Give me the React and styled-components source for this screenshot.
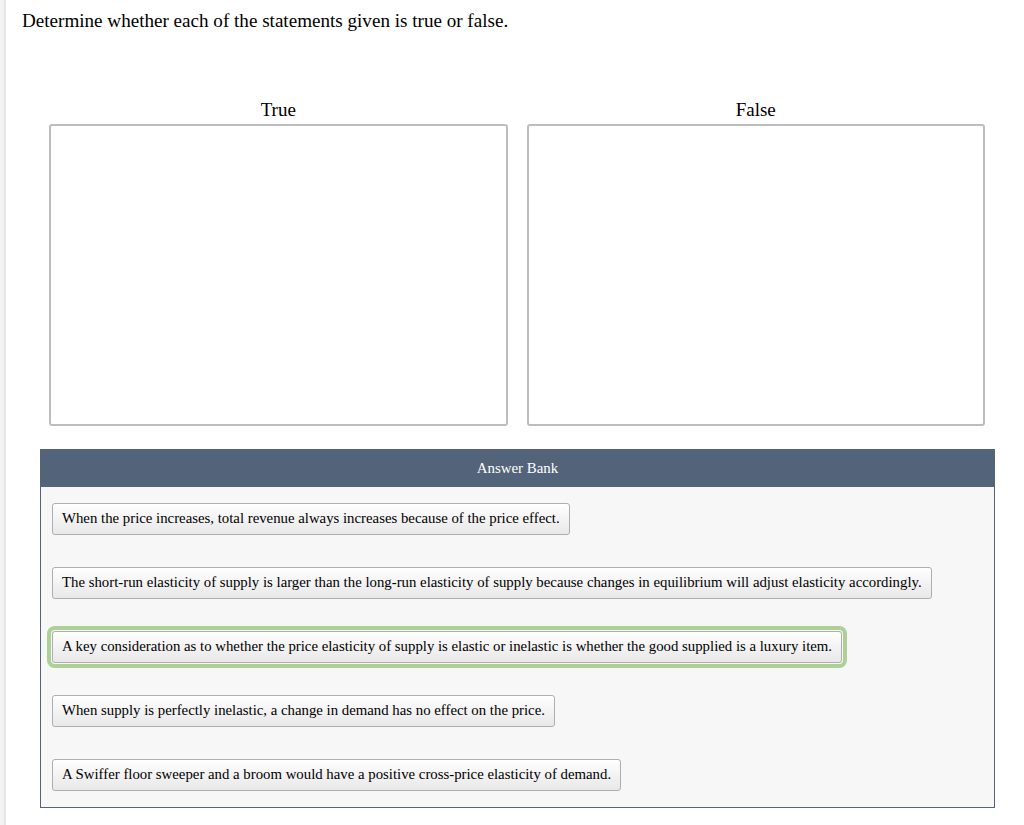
import * as React from 'react';
import styled, { createGlobalStyle } from 'styled-components';

const GlobalStyle = createGlobalStyle`
  html, body {
    margin: 0;
    padding: 0;
    background: #ffffff;
  }
  body {
    font-family: "Liberation Serif", "Times New Roman", serif;
    color: #000000;
  }
`;

const Page = styled.div`
  min-height: 825px;
  border-left: 4px solid #f2f2f2;
  box-sizing: border-box;
`;

const Content = styled.div`
  min-height: 825px;
  border-left: 2px solid #e6e6e6;
  padding: 10px 28px 18px 16px;
  box-sizing: border-box;
`;

const Prompt = styled.div`
  font-size: 19.1px;
  line-height: 22px;
`;

const Columns = styled.div`
  display: grid;
  grid-template-columns: 1fr 1fr;
  column-gap: 19px;
  width: 936px;
  margin: 67px 0 0 27px;
`;

const Column = styled.div`
  display: flex;
  flex-direction: column;
  gap: 3px;
`;

const ColumnLabel = styled.div`
  font-size: 19px;
  line-height: 22px;
  text-align: center;
`;

const DropZone = styled.div`
  height: 302px;
  border: 2px solid #bdbdbd;
  border-radius: 3px;
  background: #ffffff;
  box-sizing: border-box;
`;

const Bank = styled.section`
  width: 955px;
  margin: 23px 0 0 18px;
  border: 1px solid #536379;
  box-sizing: border-box;
`;

const BankHeader = styled.div`
  height: 37px;
  background: #536379;
  color: #ffffff;
  font-size: 14.9px;
  line-height: 37px;
  text-align: center;
`;

const BankBody = styled.div`
  display: flex;
  flex-direction: column;
  align-items: flex-start;
  gap: 32px;
  padding: 16px 11px 16px 11px;
  background: #f7f7f7;
`;

const Chip = styled.div`
  height: 32px;
  box-sizing: border-box;
  padding: 0 9px 1px;
  font-size: 14.8px;
  line-height: 29px;
  white-space: nowrap;
  border: 1px solid #aeaeae;
  border-radius: 3px;
  background: linear-gradient(to bottom, #ffffff 0%, #f3f3f3 50%, #e8e8e8 100%);
  box-shadow: ${(props) =>
    props.$focused ? '0 0 0 1px #f7f7f7, 0 0 0 5px #acd095' : 'none'};
`;

const statements = [
  'When the price increases, total revenue always increases because of the price effect.',
  'The short-run elasticity of supply is larger than the long-run elasticity of supply because changes in equilibrium will adjust elasticity accordingly.',
  'A key consideration as to whether the price elasticity of supply is elastic or inelastic is whether the good supplied is a luxury item.',
  'When supply is perfectly inelastic, a change in demand has no effect on the price.',
  'A Swiffer floor sweeper and a broom would have a positive cross-price elasticity of demand.',
];

export default function App() {
  return (
    <>
      <GlobalStyle />
      <Page>
        <Content>
          <Prompt>Determine whether each of the statements given is true or false.</Prompt>
          <Columns>
            <Column>
              <ColumnLabel>True</ColumnLabel>
              <DropZone />
            </Column>
            <Column>
              <ColumnLabel>False</ColumnLabel>
              <DropZone />
            </Column>
          </Columns>
          <Bank>
            <BankHeader>Answer Bank</BankHeader>
            <BankBody>
              {statements.map((text, i) => (
                <Chip key={text} $focused={i === 2}>
                  {text}
                </Chip>
              ))}
            </BankBody>
          </Bank>
        </Content>
      </Page>
    </>
  );
}
